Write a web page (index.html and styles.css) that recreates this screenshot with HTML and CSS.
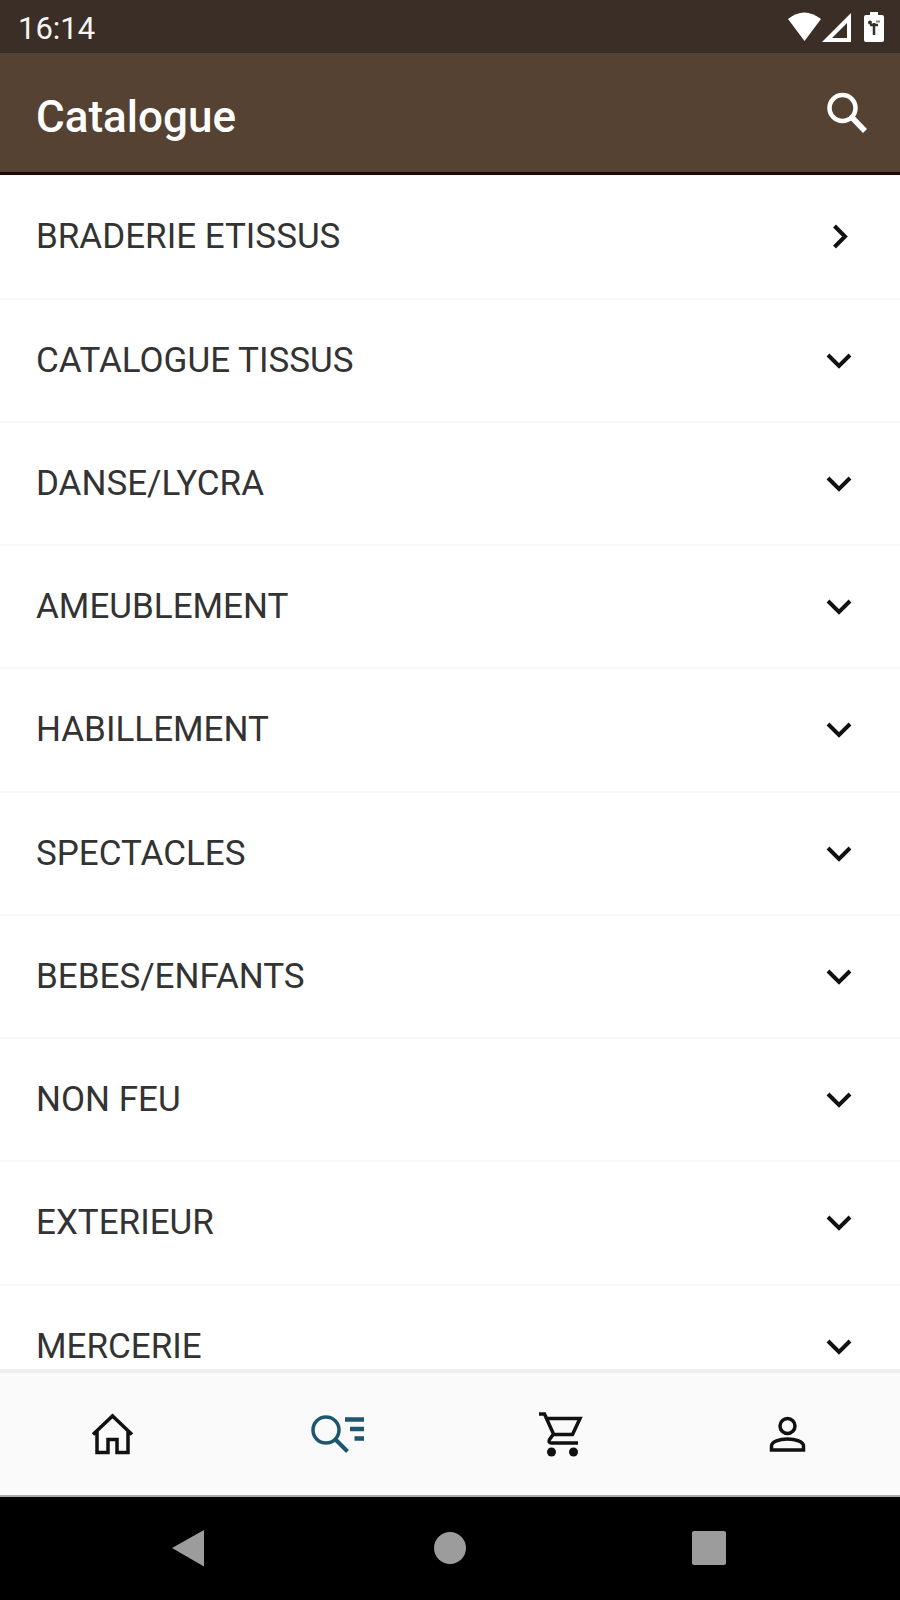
FILE: index.html
```html
<!DOCTYPE html>
<html lang="fr">
<head>
<meta charset="utf-8">
<meta name="viewport" content="width=device-width, initial-scale=1">
<title>Catalogue</title>
<link rel="stylesheet" href="styles.css">
</head>
<body>
<div class="app">
  <div class="status">
    <time class="clock">16:14</time>
    <svg class="status-icons" width="100" height="34" viewBox="0 0 100 34" fill="#fff" aria-hidden="true">
      <path d="M2 9Q18-4 35 9L18.500 31Z"/>
      <path fill-rule="evenodd" d="M65 3V32H36ZM61 13L46 28H61Z"/>
      <path d="M84 2h8v3h4q2 0 2 2v23q0 2-2 2H80q-2 0-2-2V7q0-2 2-2h4z"/>
      <path d="M88 13v12M84 15h8" fill="none" stroke="#3b2e26" stroke-width="2.500"/>
      <circle cx="84" cy="12.500" r="2" fill="#3b2e26"/><path d="M90 11.500h4" stroke="#8b827c" stroke-width="2"/>
    </svg>
  </div>
  <header class="header">
    <h1 class="title">Catalogue</h1>
    <button class="search" aria-label="Rechercher">
      <svg width="42" height="42" viewBox="0 0 42 42" fill="none" stroke="#fff" aria-hidden="true"><circle cx="16.500" cy="16" r="13" stroke-width="4.500"/><path d="M26 25.500L39 39" stroke-width="5.500"/></svg>
    </button>
  </header>
  <main class="list">
    <a class="row" href="#braderie">BRADERIE ETISSUS<svg class="chevron" viewBox="0 0 28 28"><path d="M9.500 3L20 13.500L9.500 24"/></svg></a>
    <button class="row">CATALOGUE TISSUS<svg class="chevron" viewBox="0 0 28 28"><path d="M3 8L14 19L25 8"/></svg></button>
    <button class="row">DANSE/LYCRA<svg class="chevron" viewBox="0 0 28 28"><path d="M3 8L14 19L25 8"/></svg></button>
    <button class="row">AMEUBLEMENT<svg class="chevron" viewBox="0 0 28 28"><path d="M3 8L14 19L25 8"/></svg></button>
    <button class="row">HABILLEMENT<svg class="chevron" viewBox="0 0 28 28"><path d="M3 8L14 19L25 8"/></svg></button>
    <button class="row">SPECTACLES<svg class="chevron" viewBox="0 0 28 28"><path d="M3 8L14 19L25 8"/></svg></button>
    <button class="row">BEBES/ENFANTS<svg class="chevron" viewBox="0 0 28 28"><path d="M3 8L14 19L25 8"/></svg></button>
    <button class="row">NON FEU<svg class="chevron" viewBox="0 0 28 28"><path d="M3 8L14 19L25 8"/></svg></button>
    <button class="row">EXTERIEUR<svg class="chevron" viewBox="0 0 28 28"><path d="M3 8L14 19L25 8"/></svg></button>
    <button class="row">MERCERIE<svg class="chevron" viewBox="0 0 28 28"><path d="M3 8L14 19L25 8"/></svg></button>
  </main>
  <nav class="tabs" aria-label="Navigation">
    <a class="tab" href="#accueil" aria-label="Accueil"><svg width="56" height="48" viewBox="0 0 56 48"><path d="M8 24.500L27.500 6L47 24.500M12 21V42.500H23V29.500H32V42.500H43V21" stroke-width="3.500"/></svg></a>
    <a class="tab tab-active" href="#catalogue" aria-label="Catalogue" aria-current="page"><svg width="56" height="48" viewBox="0 0 56 48"><circle cx="16" cy="20" r="13" stroke-width="3.500"/><path d="M25.500 29.500L37.500 41.500" stroke-width="4"/><path d="M35 9.500H54M40 19H54M44.500 28.500H54" stroke-width="4.500"/></svg></a>
    <a class="tab" href="#panier" aria-label="Panier"><svg width="56" height="48" viewBox="0 0 56 48"><path d="M4 4H9.500L18.500 24L14.500 29.500Q13 33 16.500 33H43M12 8.500H45L37.500 24.500H18" stroke-width="3.500"/><circle class="solid" cx="16.500" cy="42" r="4.500"/><circle class="solid" cx="38.500" cy="42" r="4.500"/></svg></a>
    <a class="tab" href="#compte" aria-label="Compte"><svg width="56" height="48" viewBox="0 0 56 48"><circle cx="27.500" cy="16" r="7.500" stroke-width="3.500"/><path d="M11.500 40V36C11.500 31.500 19.500 29 27.500 29S43.500 31.500 43.500 36V40Z" stroke-width="3.500"/></svg></a>
  </nav>
  <div class="system">
    <button class="key" aria-label="Retour"><svg width="38" height="38" viewBox="0 0 38 38"><path d="M1 18L33 0V36.500Z"/></svg></button>
    <button class="key" aria-label="Écran d’accueil"><svg width="38" height="38" viewBox="0 0 38 38"><circle cx="19" cy="18" r="16"/></svg></button>
    <button class="key" aria-label="Applications récentes"><svg width="38" height="38" viewBox="0 0 38 38"><rect x="1" y="1" width="34" height="34" rx="2"/></svg></button>
  </div>
</div>
</body>
</html>
```
FILE: styles.css
```css
* {
  box-sizing: border-box;
}

body {
  margin: 0;
  background: #fff;
  color: #333;
  font-family: Roboto, "Liberation Sans", sans-serif;
}

button {
  padding: 0;
  border: 0;
  background: none;
  color: inherit;
  font: inherit;
}

svg {
  display: block;
  flex: none;
}

.app {
  display: flex;
  flex-direction: column;
  height: 100vh;
}

.status {
  display: flex;
  flex: none;
  align-items: center;
  justify-content: space-between;
  height: 53px;
  padding: 0 14px 0 18px;
  background: #3b2e26;
}

.clock {
  color: #f4f4f4;
  font-size: 31px;
  line-height: 40px;
  padding-top: 4px;
}

.header {
  display: flex;
  flex: none;
  align-items: center;
  justify-content: space-between;
  height: 122px;
  padding: 0 32px 0 36px;
  border-bottom: 3px solid #200807;
  background: #554233;
}

.title {
  margin: 0;
  padding-top: 8px;
  color: #fff;
  font-size: 44px;
  font-weight: 500;
  line-height: 52px;
}

.list {
  flex: 1;
  min-height: 0;
  padding-top: 1px;
  overflow: hidden;
}

.row {
  display: flex;
  align-items: center;
  justify-content: space-between;
  width: 100%;
  height: 123px;
  padding: 0 47px 0 36px;
  border-bottom: 2px solid #f7f7f7;
  color: inherit;
  font-size: 35px;
  font-weight: 400;
  line-height: 44px;
  text-align: left;
  text-decoration: none;
}

.row:nth-child(4n + 1) {
  height: 124px;
}

.chevron {
  width: 28px;
  height: 28px;
  fill: none;
  stroke: #111;
  stroke-width: 4px;
}

.tabs {
  display: grid;
  flex: none;
  grid-template-columns: repeat(4, 1fr);
  height: 128px;
  border-top: 4px solid #eee;
  border-bottom: 2px solid #ababab;
  background: #fafafa;
}

.tab {
  display: flex;
  align-items: center;
  justify-content: center;
  fill: none;
  stroke: #111;
}

.tab-active {
  stroke: #1d566e;
}

.solid {
  fill: #111;
  stroke: none;
}

.system {
  display: flex;
  flex: none;
  align-items: center;
  justify-content: space-between;
  height: 103px;
  padding: 0 19%;
  background: #000;
}

.key {
  fill: #9c9c9c;
}
```
